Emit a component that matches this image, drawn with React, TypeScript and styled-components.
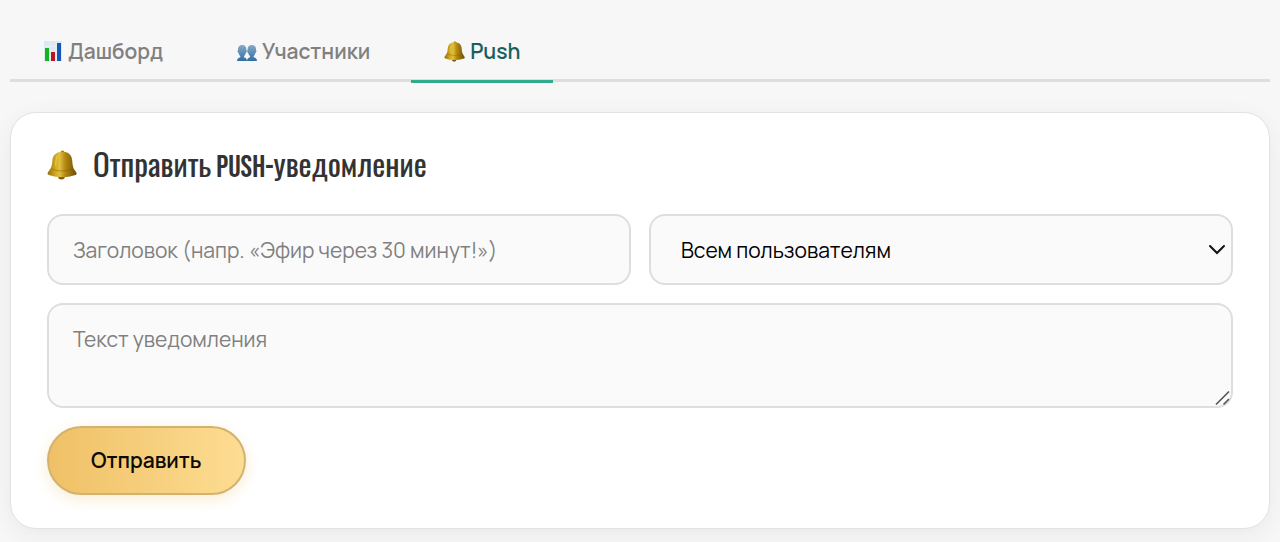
import React from "react";
import styled, { createGlobalStyle, css } from "styled-components";

const GlobalStyle = createGlobalStyle`
  *, *::before, *::after { box-sizing: border-box; }
  body {
    margin: 0;
    background: #f7f7f7;
    color: #333;
    font-family: Manrope, Inter, "Liberation Sans", sans-serif;
  }
  button, input, select, textarea { font: inherit; }
`;

const Page = styled.main`
  padding: 24px 10px 14px;
`;

const Tabs = styled.nav`
  display: flex;
  gap: 8px;
  margin-bottom: 30px;
  border-bottom: 3px solid #dedede;
`;

const Tab = styled.button<{ $active?: boolean }>`
  display: flex;
  align-items: center;
  gap: 5px;
  height: 59px;
  margin-bottom: -4px;
  padding: 0 33px 2px;
  border: 0;
  border-bottom: 3px solid ${(p) => (p.$active ? "#2fab8b" : "transparent")};
  background: none;
  color: ${(p) => (p.$active ? "#17605f" : "#808080")};
  font-size: 21px;
  font-weight: 600;
  white-space: nowrap;
  cursor: pointer;
`;

const Icon = styled.svg<{ $size: number }>`
  flex: none;
  display: block;
  width: ${(p) => p.$size}px;
  height: ${(p) => p.$size}px;
`;

const Card = styled.section`
  padding: 31px 36px 33px;
  border: 1px solid #e2e2e2;
  border-radius: 26px;
  background: #fff;
  box-shadow: 0 6px 24px rgba(0, 0, 0, 0.06);
`;

const Title = styled.h2`
  display: flex;
  align-items: center;
  gap: 16px;
  margin: 0 0 28px;
  color: #333;
  font-family: "Bebas Neue", Oswald, "Liberation Sans Narrow", "Roboto Condensed", sans-serif;
  font-size: 31px;
  font-weight: 400;
  line-height: 36px;
`;

const TitleText = styled.span`
  padding-top: 6px;
`;

const Form = styled.form`
  display: grid;
  grid-template-columns: 1fr 1fr;
  gap: 18px;
`;

const field = css`
  display: block;
  width: 100%;
  margin: 0;
  border: 2px solid #dedede;
  border-radius: 16px;
  background: #fafafa;
  color: #000;
  font-size: 21px;
  font-weight: 400;
  line-height: 28px;
  &::placeholder { color: #808080; opacity: 1; }
`;

const TextInput = styled.input`
  ${field}
  height: 71px;
  padding: 0 24px;
`;

const Holder = styled.div<{ $wide?: boolean }>`
  position: relative;
  ${(p) => p.$wide && css`grid-column: 1 / -1;`}
`;

const Select = styled.select`
  ${field}
  height: 71px;
  padding: 0 40px 0 30px;
  appearance: none;
`;

const Chevron = styled.svg`
  position: absolute;
  top: 30px;
  right: 7px;
  width: 18px;
  height: 12px;
  pointer-events: none;
`;

const TextArea = styled.textarea`
  ${field}
  height: 105px;
  padding: 20px 24px;
  resize: vertical;
  &::-webkit-resizer { background: transparent; }
`;

const Grip = styled.svg`
  position: absolute;
  right: 2px;
  bottom: 2px;
  width: 16px;
  height: 16px;
  pointer-events: none;
`;

const Submit = styled.button`
  justify-self: start;
  height: 69px;
  padding: 0 42px 2px;
  border: 2px solid #d3b26d;
  border-radius: 35px;
  background: linear-gradient(90deg, #efc066, #fddd93) border-box;
  box-shadow: 0 4px 14px rgba(239, 192, 102, 0.3);
  color: #0c0a05;
  font-size: 21px;
  font-weight: 600;
  white-space: nowrap;
  cursor: pointer;
`;

function Bell({ size, id }: { size: number; id: string }) {
  return (
    <Icon $size={size} viewBox="0 0 30 30" aria-hidden="true">
      <defs>
        <linearGradient id={id}>
          <stop offset="0" stopColor="#94700f" />
          <stop offset=".28" stopColor="#d3ab1c" />
          <stop offset=".42" stopColor="#dfc040" />
          <stop offset=".6" stopColor="#b58a10" />
          <stop offset="1" stopColor="#6e4e08" />
        </linearGradient>
      </defs>
      <circle cx="15.5" cy="2.6" r="2" fill="#a87b0c" />
      <ellipse cx="14.5" cy="26.6" rx="3.4" ry="3" fill="#825507" />
      <path d="M15.5 1.8C9.5 1.8 5.8 5 5.4 10.5C5.1 15.5 4.2 18 2 20.8C.2 23 0 24.4 1.8 25Q15 29.4 28.6 25C30 24.4 30 23 28.4 21C26 18.2 25.6 15.5 25.2 10.5C24.8 5 21.5 1.8 15.5 1.8Z" fill={`url(#${id})`} />
      <path d="M4.5 19Q15 23 26 19" fill="none" stroke="#7f5c07" strokeWidth="1" opacity=".5" />
      <path d="M10.5 6Q8.4 9 8.8 16" fill="none" stroke="#f5dc68" strokeWidth="1.1" opacity=".6" />
    </Icon>
  );
}

function Chart() {
  return (
    <Icon $size={20} viewBox="0 0 20 20" aria-hidden="true">
      <path d="M1 0H19V20H1Z" fill="#dce8f1" />
      <path d="M1 5H19M1 10H19M1 15H19M7 0V20M13 0V20" stroke="#edf3f7" strokeWidth=".7" />
      <path d="M2 7H6V20H2Z" fill="#12b51b" />
      <path d="M8 11H12V20H8Z" fill="#bd1220" />
      <path d="M14 2H18V20H14Z" fill="#1557b8" />
    </Icon>
  );
}

function People() {
  return (
    <Icon $size={20} viewBox="0 0 20 20" aria-hidden="true">
      <defs>
        <linearGradient id="people" x2="0" y2="1">
          <stop offset="0" stopColor="#86a9c9" />
          <stop offset="1" stopColor="#326da1" />
        </linearGradient>
      </defs>
      <g fill="url(#people)">
        <path d="M5.2 4C2.2 4 .8 6 1 9C.3 9.2 .6 11.8 1.6 12C1.9 13.3 2.5 14.4 3.3 15V16.2C1.2 16.8 .2 17.4 0 20H10C9.8 17.4 8.9 16.8 7 16.2V15C7.9 14.4 8.5 13.3 8.8 12C9.8 11.8 10.1 9.2 9.4 9C9.6 6 8.2 4 5.2 4Z" />
        <path d="M14.8 4C11.8 4 10.4 6 10.6 9C9.9 9.2 10.2 11.8 11.2 12C11.5 13.3 12.1 14.4 13 15V16.2C11.1 16.8 10.2 17.4 10 20H20C19.8 17.4 18.8 16.8 16.7 16.2V15C17.5 14.4 18.1 13.3 18.4 12C19.4 11.8 19.7 9.2 19 9C19.2 6 17.8 4 14.8 4Z" />
      </g>
    </Icon>
  );
}

export default function App() {
  return (
    <>
      <GlobalStyle />
      <Page>
        <Tabs>
          <Tab type="button"><Chart />Дашборд</Tab>
          <Tab type="button"><People />Участники</Tab>
          <Tab type="button" $active aria-current="page"><Bell size={21} id="tab-bell" />Push</Tab>
        </Tabs>
        <Card>
          <Title>
            <Bell size={30} id="title-bell" />
            <TitleText>Отправить PUSH-уведомление</TitleText>
          </Title>
          <Form onSubmit={(e) => e.preventDefault()}>
            <TextInput aria-label="Заголовок" placeholder="Заголовок (напр. «Эфир через 30 минут!»)" />
            <Holder>
              <Select aria-label="Получатели">
                <option>Всем пользователям</option>
              </Select>
              <Chevron viewBox="0 0 18 12" aria-hidden="true">
                <path d="M2 2L9 9L16 2" fill="none" stroke="#111" strokeWidth="2" strokeLinecap="round" />
              </Chevron>
            </Holder>
            <Holder $wide>
              <TextArea aria-label="Текст уведомления" placeholder="Текст уведомления" />
              <Grip viewBox="0 0 16 16" aria-hidden="true">
                <path d="M1 14.5L14 1.5M8.5 14.5L14 9" fill="none" stroke="#555" strokeWidth="1.6" />
              </Grip>
            </Holder>
            <Submit type="submit">Отправить</Submit>
          </Form>
        </Card>
      </Page>
    </>
  );
}
